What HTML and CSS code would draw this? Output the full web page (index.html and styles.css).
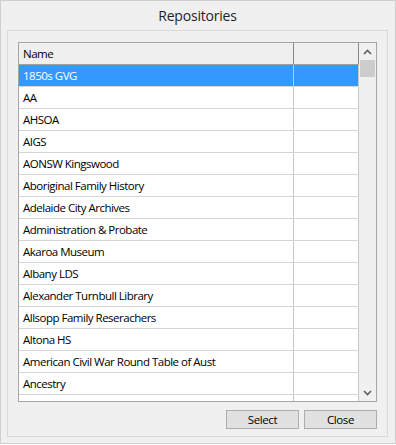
FILE: index.html
```html
<!DOCTYPE html>
<html lang="en">
<head>
    <meta charset="UTF-8">
    <meta name="viewport" content="width=device-width, initial-scale=1.0">
    <title>Repositories</title>
    <link rel="stylesheet" href="styles.css">
</head>
<body>
    <div class="dialog">
        <h1 class="title">Repositories</h1>

        <div class="panel">
            <div class="list">
                <div class="grid">
                    <div class="row head">
                        <div class="cell name">Name</div>
                        <div class="cell extra"></div>
                    </div>
                    <div class="row selected"><div class="cell name">1850s GVG</div><div class="cell extra"></div></div>
                    <div class="row"><div class="cell name">AA</div><div class="cell extra"></div></div>
                    <div class="row"><div class="cell name">AHSOA</div><div class="cell extra"></div></div>
                    <div class="row"><div class="cell name">AIGS</div><div class="cell extra"></div></div>
                    <div class="row"><div class="cell name">AONSW Kingswood</div><div class="cell extra"></div></div>
                    <div class="row"><div class="cell name">Aboriginal Family History</div><div class="cell extra"></div></div>
                    <div class="row"><div class="cell name">Adelaide City Archives</div><div class="cell extra"></div></div>
                    <div class="row"><div class="cell name">Administration &amp; Probate</div><div class="cell extra"></div></div>
                    <div class="row"><div class="cell name">Akaroa Museum</div><div class="cell extra"></div></div>
                    <div class="row"><div class="cell name">Albany LDS</div><div class="cell extra"></div></div>
                    <div class="row"><div class="cell name">Alexander Turnbull Library</div><div class="cell extra"></div></div>
                    <div class="row"><div class="cell name">Allsopp Family Reserachers</div><div class="cell extra"></div></div>
                    <div class="row"><div class="cell name">Altona HS</div><div class="cell extra"></div></div>
                    <div class="row"><div class="cell name">American Civil War Round Table of Aust</div><div class="cell extra"></div></div>
                    <div class="row"><div class="cell name">Ancestry</div><div class="cell extra"></div></div>
                    <div class="row"><div class="cell name"></div><div class="cell extra"></div></div>
                </div>

                <div class="scrollbar">
                    <div class="arrow">
                        <svg width="9" height="6" viewBox="0 0 9 6"><path d="M1 5 L4.5 1.5 L8 5" fill="none" stroke="#606060" stroke-width="1.6"/></svg>
                    </div>
                    <div class="thumb"></div>
                    <div class="track"></div>
                    <div class="arrow">
                        <svg width="9" height="6" viewBox="0 0 9 6"><path d="M1 1 L4.5 4.5 L8 1" fill="none" stroke="#606060" stroke-width="1.6"/></svg>
                    </div>
                </div>
            </div>

            <div class="buttons">
                <button class="btn">Select</button>
                <button class="btn">Close</button>
            </div>
        </div>
    </div>
</body>
</html>
```

FILE: styles.css
```css
html, body {
    margin: 0;
    padding: 0;
}
body {
    background: #ffffff;
    font-family: "Open Sans", "Noto Sans", sans-serif;
    color: #000;
}
.dialog {
    width: 396px;
    height: 444px;
    box-sizing: border-box;
    border: 1px solid #cfcfcf;
    background: #f0f0f0;
    padding: 0 7px 6px 6px;
    display: flex;
    flex-direction: column;
}
.title {
    margin: 0;
    height: 29px;
    font-size: 14px;
    font-weight: normal;
    color: #1f1f1f;
    text-align: center;
    line-height: 30px;
    letter-spacing: -0.2px;
}
.panel {
    flex: 1;
    border: 1px solid #dadada;
    padding: 11px 10px 0 10px;
    display: flex;
    flex-direction: column;
}
.list {
    height: 358px;
    border: 1px solid #a5a5a5;
    background: #ffffff;
    display: flex;
    overflow: hidden;
}
.grid {
    width: 341px;
    overflow: hidden;
}
.row {
    display: flex;
    height: 21px;
    border-bottom: 1px solid #d5d5d5;
    font-size: 11.5px;
    letter-spacing: -0.5px;
    line-height: 21px;
}
.cell {
    box-sizing: border-box;
    padding-left: 4px;
    white-space: nowrap;
    overflow: hidden;
}
.name {
    width: 276px;
    border-right: 1px solid #c8c8c8;
}
.extra {
    width: 65px;
    border-right: 1px solid #c8c8c8;
}
.head {
    background: #efefef;
    border-bottom: 1px solid #a0a0a0;
}
.head .name,
.head .extra {
    border-right-color: #888888;
}
.selected {
    background: #3399ff;
    color: #ffffff;
}
.selected .name {
    border-right-color: #c8c8c8;
}
.scrollbar {
    width: 17px;
    background: #f0f0f0;
    display: flex;
    flex-direction: column;
}
.arrow {
    height: 17px;
    display: flex;
    align-items: center;
    justify-content: center;
}
.thumb {
    height: 17px;
    margin: 0 1px;
    background: #cdcdcd;
}
.track {
    flex: 1;
}
.buttons {
    display: flex;
    justify-content: flex-end;
    gap: 5px;
    margin-top: 8px;
}
.btn {
    width: 73px;
    height: 19px;
    border: 1px solid #adadad;
    background: #e1e1e1;
    font-family: "Open Sans", "Noto Sans", sans-serif;
    font-size: 11.5px;
    letter-spacing: -0.4px;
    color: #000;
    padding: 0;
    line-height: 16px;
}
```
